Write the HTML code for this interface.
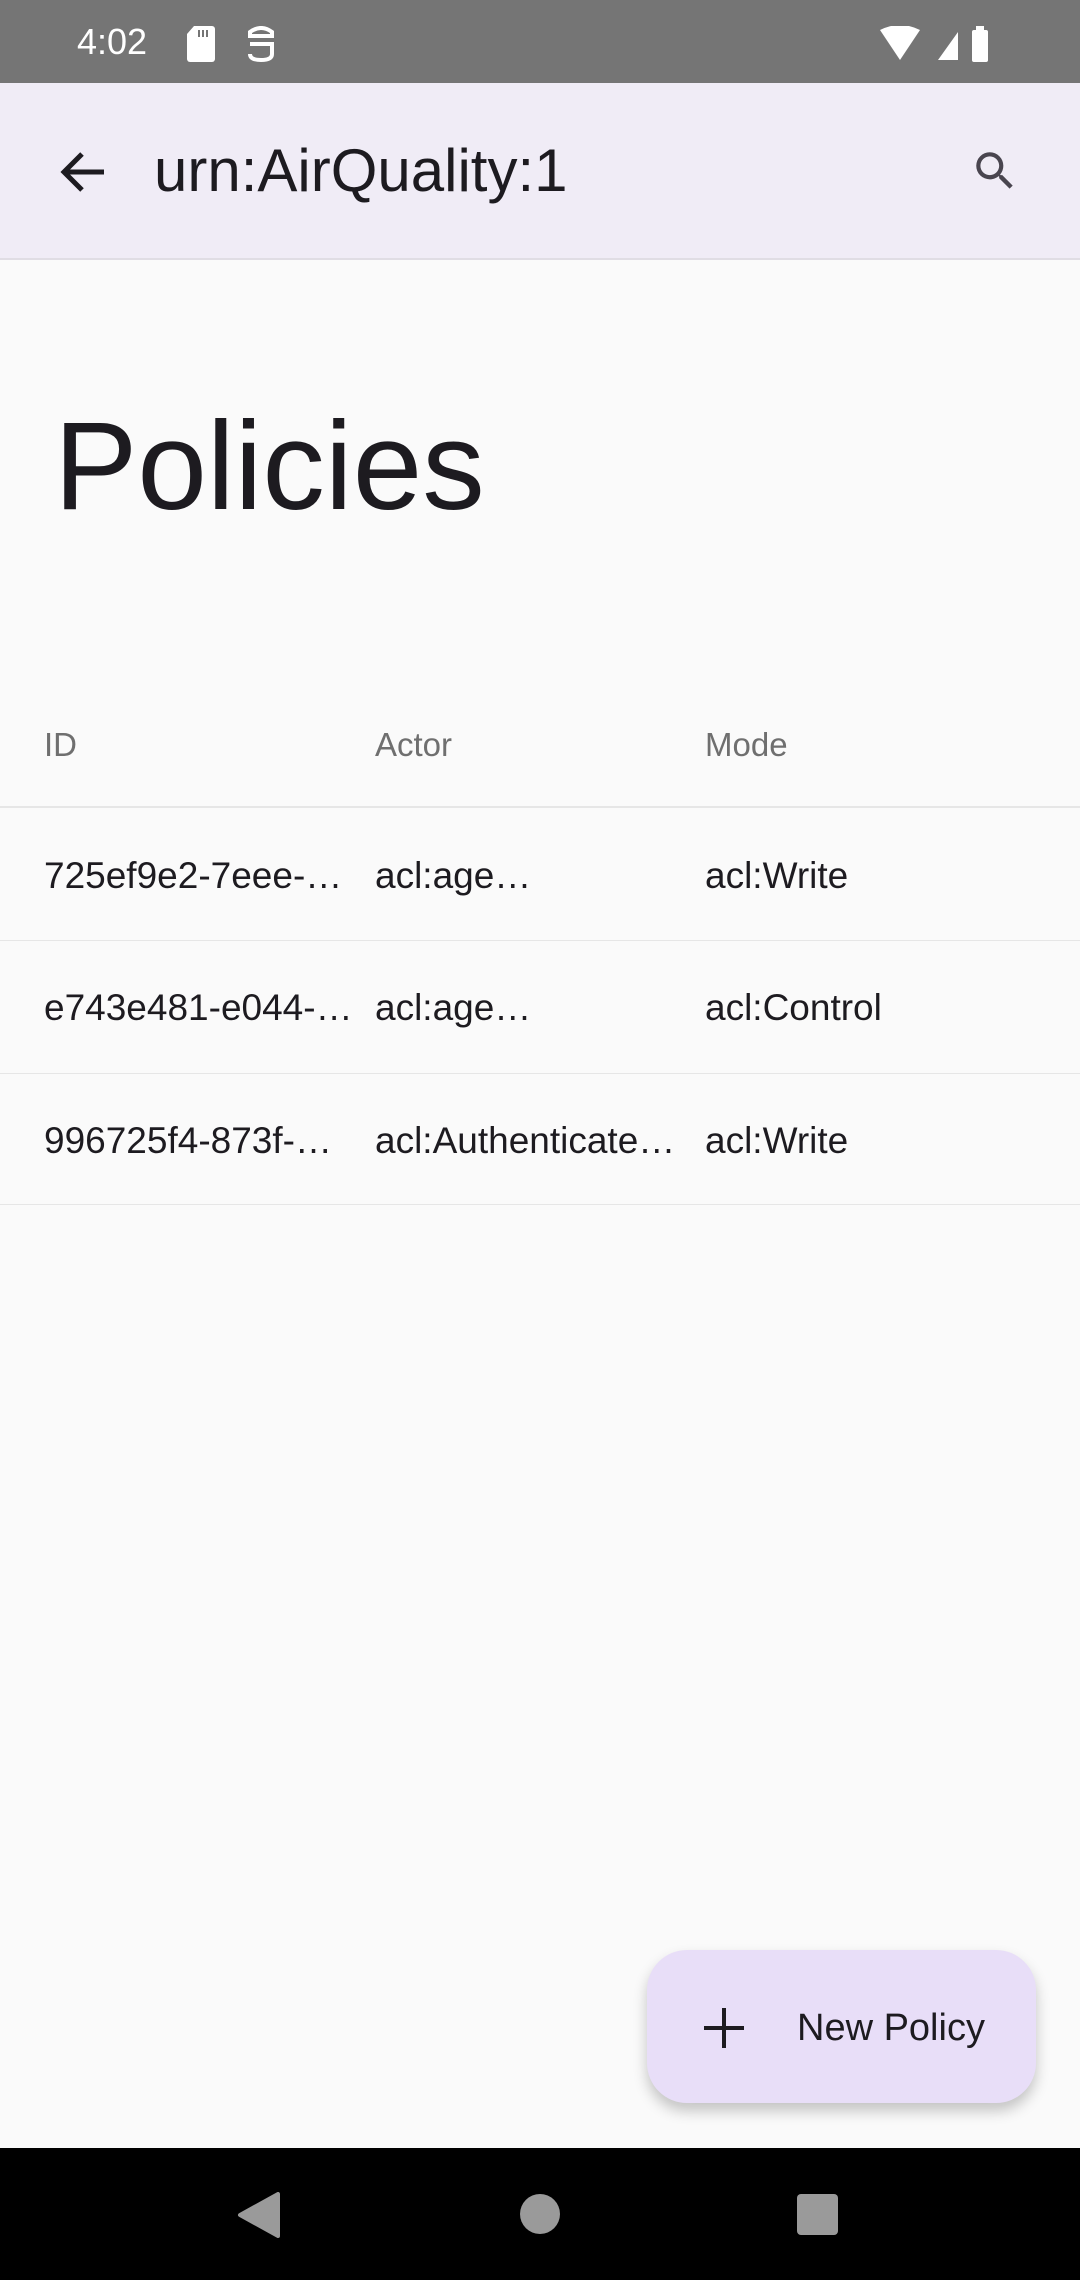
<!DOCTYPE html>
<html><head><meta charset="utf-8"><style>
*{margin:0;padding:0;box-sizing:border-box}
body{width:1080px;height:2280px;background:#fafafa;font-family:"Liberation Sans",Roboto,sans-serif;position:relative;overflow:hidden;color:#1d1b20}
.abs{position:absolute}
.sb{left:0;top:0;width:1080px;height:83px;background:#757575}
.ab{left:0;top:83px;width:1080px;height:177px;background:#f0ecf6;border-bottom:2px solid #e0dde4}
.t{white-space:nowrap;line-height:1}
.hdr{font-size:33px;color:#6f6f6f}
.cell{font-size:37px;color:#1d1b20}
.div{left:0;width:1080px;height:2px;background:#e6e6e6}
.fab{left:647px;top:1950px;width:389px;height:153px;background:#e8def8;border-radius:40px;box-shadow:0 8px 14px rgba(0,0,0,.22)}
.nav{left:0;top:2148px;width:1080px;height:132px;background:#000}
</style></head><body>
<div class="abs sb"></div>
<div class="abs t" style="left:77px;top:24px;font-size:36px;color:#fff">4:02</div>
<svg class="abs" style="left:186px;top:26px" width="30" height="36"><path d="M8 0H26a3 3 0 0 1 3 3V33a3 3 0 0 1-3 3H4a3 3 0 0 1-3-3V8Z" fill="#fff"/><rect x="12" y="4" width="2" height="7" fill="#757575"/><rect x="16" y="4" width="2" height="7" fill="#757575"/><rect x="20" y="4" width="2" height="7" fill="#757575"/></svg>
<svg class="abs" style="left:246px;top:26px" width="30" height="36"><path d="M4 6Q15 -2 26 6V10H4ZM4 18H26V28Q26 34 15 34Q4 34 4 28" fill="none" stroke="#fff" stroke-width="4"/></svg>
<svg class="abs" style="left:880px;top:26px" width="115" height="36"><path d="M0 4Q20 -6 40 4L20 34Z" fill="#fff"/><path d="M58 34L78 6V34Z" fill="#fff"/><rect x="92" y="4" width="16" height="32" rx="2" fill="#fff"/><rect x="96" y="0" width="8" height="6" fill="#fff"/></svg>
<div class="abs ab"></div>
<svg class="abs" style="left:58px;top:150px" width="50" height="44" viewBox="0 0 50 44"><path d="M46 22H6M24 4L6 22L24 40" fill="none" stroke="#1d1b20" stroke-width="5"/></svg>
<div class="abs t" style="left:154px;top:141px;font-size:60px">urn:AirQuality:1</div>
<svg class="abs" style="left:970px;top:146px" width="50" height="50" viewBox="0 0 24 24"><path d="M15.5 14h-.79l-.28-.27A6.47 6.47 0 0 0 16 9.5 6.5 6.5 0 1 0 9.5 16c1.61 0 3.09-.59 4.23-1.57l.27.28v.79l5 4.99L20.49 19l-4.99-5zm-6 0C7.01 14 5 11.99 5 9.5S7.01 5 9.5 5 14 7.01 14 9.5 11.99 14 9.5 14z" fill="#49454f"/></svg>
<div class="abs t" style="left:54px;top:404px;font-size:125px;color:#1d1b20">Policies</div>
<div class="abs t hdr" style="left:44px;top:728px">ID</div>
<div class="abs t hdr" style="left:375px;top:728px">Actor</div>
<div class="abs t hdr" style="left:705px;top:728px">Mode</div>
<div class="abs div" style="top:806px"></div>
<div class="abs t cell" style="left:44px;top:857px">725ef9e2-7eee-…</div>
<div class="abs t cell" style="left:375px;top:857px">acl:age…</div>
<div class="abs t cell" style="left:705px;top:857px">acl:Write</div>
<div class="abs div" style="top:940px;height:1px"></div>
<div class="abs t cell" style="left:44px;top:989px;width:310px;overflow:hidden">e743e481-e044-…</div>
<div class="abs t cell" style="left:375px;top:989px">acl:age…</div>
<div class="abs t cell" style="left:705px;top:989px">acl:Control</div>
<div class="abs div" style="top:1073px;height:1px"></div>
<div class="abs t cell" style="left:44px;top:1122px">996725f4-873f-…</div>
<div class="abs t cell" style="left:375px;top:1122px;width:305px;overflow:hidden">acl:Authenticate…</div>
<div class="abs t cell" style="left:705px;top:1122px">acl:Write</div>
<div class="abs div" style="top:1204px;height:1px"></div>
<div class="abs fab"></div>
<svg class="abs" style="left:704px;top:2008px" width="40" height="40"><path d="M20 0V40M0 20H40" stroke="#1d1b20" stroke-width="4"/></svg>
<div class="abs t" style="left:797px;top:2009px;font-size:38px;color:#1d1b20;font-weight:500">New Policy</div>
<div class="abs nav"></div>
<svg class="abs" style="left:236px;top:2192px" width="44" height="46"><path d="M42 2V44L4 23Z" fill="#9a9a9a" stroke="#9a9a9a" stroke-width="4" stroke-linejoin="round"/></svg>
<div class="abs" style="left:520px;top:2194px;width:40px;height:40px;border-radius:50%;background:#9a9a9a"></div>
<div class="abs" style="left:797px;top:2194px;width:41px;height:41px;border-radius:4px;background:#9a9a9a"></div>
</body></html>
